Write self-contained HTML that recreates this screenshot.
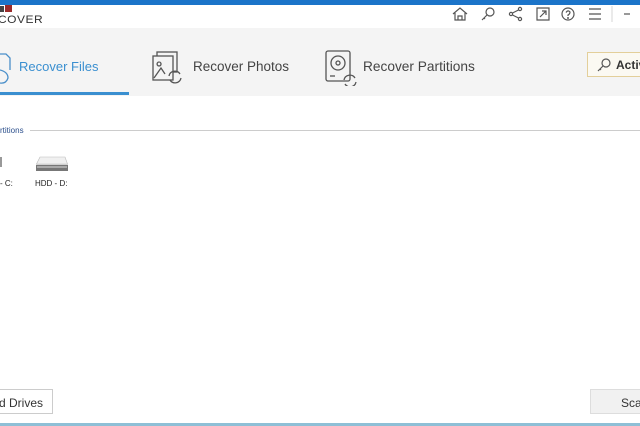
<!DOCTYPE html>
<html><head><meta charset="utf-8"><style>
*{margin:0;padding:0;box-sizing:border-box}
body{width:640px;height:426px;overflow:hidden;background:#fff;font-family:"Liberation Sans",sans-serif;position:relative}
.abs{position:absolute;white-space:nowrap}
.tab{position:absolute;top:59px;color:#444;white-space:nowrap}
</style></head><body>
<div class="abs" style="left:0;top:0;width:640px;height:5px;background:#1b74c9"></div>
<div class="abs" style="left:0;top:6px;width:12px;height:6px;background:#444;clip-path:polygon(0 0,100% 0,100% 100%,0 100%)"></div>
<div class="abs" style="left:4px;top:6px;width:2px;height:6px;background:#fff"></div>
<div class="abs" style="left:5px;top:5px;width:7px;height:7px;background:#9b2b2b"></div>
<div class="abs" style="left:-2px;top:12px;font:12px 'Liberation Sans';color:#333;letter-spacing:0.5px;transform:scaleY(0.95)">COVER</div>
<!-- top icons -->
<svg class="abs" style="left:450px;top:5px" width="190" height="18" fill="none" stroke="#555" stroke-width="1.2">
<path d="M3 9 L10 3 L17 9 M5 8 V15 H15 V8 M8 15 V11 H12 V15"/>
<circle cx="40" cy="7" r="4"/><path d="M37 10 L32 15 M34 13 L35 14"/>
<circle cx="70" cy="4" r="1.6"/><circle cx="61" cy="9" r="1.6"/><circle cx="70" cy="14" r="1.6"/><path d="M68.5 5 L62.5 8 M62.5 10 L68.5 13"/>
<path d="M87 3 H99 V15 H87 Z M90 12 L96 6 M92 6 H96 V10"/>
<circle cx="118" cy="9" r="6"/><path d="M116 7.5 Q118 4.5 120 7 Q120 9 118 10 V11"/><circle cx="118" cy="13" r=".4"/>
<path d="M139 4 H151 M139 9 H151 M139 14 H151"/>
<path d="M162 1 V17" stroke="#ddd"/><path d="M174 9 H180"/>
</svg>
<div class="abs" style="left:0;top:28px;width:640px;height:68px;background:#f4f4f4"></div>
<div class="abs" style="left:0;top:92px;width:129px;height:3px;background:#3a8fd0"></div>
<!-- tab icons -->
<svg class="abs" style="left:0;top:50px" width="20" height="36" fill="none" stroke="#4a8fc9" stroke-width="1.3"><path d="M0 4 H6 L10 8 V20 M0 20 Q8 22 8 28 Q6 34 0 33"/></svg>
<div class="tab" style="left:19px;color:#3a8fd0;font-size:13px">Recover Files</div>
<svg class="abs" style="left:151px;top:50px" width="34" height="34" fill="none" stroke="#555" stroke-width="1.3"><rect x="6" y="2" width="20" height="20"/><rect x="2" y="6" width="20" height="24" fill="#f4f4f4"/><path d="M3 28 L10 18 L14 24 M8 12 a2 2 0 1 0 .1 0"/><path d="M18 26 a6 6 0 0 1 11 -2 M30 28 a6 6 0 0 1 -11 2"/></svg>
<div class="tab" style="left:193px;font-size:13.5px">Recover Photos</div>
<svg class="abs" style="left:325px;top:50px" width="34" height="36" fill="none" stroke="#555" stroke-width="1.3"><rect x="1" y="1" width="24" height="30" rx="2"/><circle cx="13" cy="13" r="7"/><circle cx="13" cy="13" r="2"/><path d="M5 26 H10"/><path d="M19 30 a6 6 0 0 1 11 -2 M31 32 a6 6 0 0 1 -11 2" /></svg>
<div class="tab" style="left:363px;font-size:13.7px">Recover Partitions</div>
<div class="abs" style="left:587px;top:52px;width:60px;height:25px;border:1px solid #e3cf9a;background:#fbf9f2;font:bold 12px 'Liberation Sans';color:#333;padding:5px 0 0 28px">Activ</div>
<svg class="abs" style="left:596px;top:57px" width="16" height="16" fill="none" stroke="#555" stroke-width="1.2"><circle cx="10" cy="6" r="4"/><path d="M7 9 L2 14 M4 12 L5 13"/></svg>
<!-- section -->
<div class="abs" style="left:0;top:126px;font-size:8px;color:#2b4f8c">rtitions</div>
<div class="abs" style="left:30px;top:130px;width:610px;height:1px;background:#ccc"></div>
<div class="abs" style="left:0;top:157px;width:2px;height:10px;background:#999"></div>
<div class="abs" style="left:0;top:179px;font-size:8px;color:#222">- C:</div>
<svg class="abs" style="left:35px;top:156px" width="34" height="18"><path d="M5 1 H30 L33 9 V15 H1 V9 Z" fill="#d8d8d8"/><path d="M5 1 H30 L32.5 8 H1.5 Z" fill="#f0f0f0" stroke="#bbb" stroke-width=".6"/><rect x="1" y="9" width="32" height="6" fill="#777"/><rect x="2" y="10" width="30" height="2" fill="#aaa"/></svg>
<div class="abs" style="left:35px;top:179px;font-size:8px;color:#222">HDD - D:</div>
<!-- bottom -->
<div class="abs" style="left:-2px;top:389px;width:55px;height:25px;border:1px solid #ccc;background:#fff;font-size:12px;color:#333;padding:6px 0 0 0">d Drives</div>
<div class="abs" style="left:590px;top:389px;width:60px;height:25px;border:1px solid #ddd;background:#f1f1f1;font-size:12px;color:#333;padding:6px 0 0 30px">Sca</div>
<div class="abs" style="left:0;top:423px;width:640px;height:3px;background:#8ebfd6"></div>
</body></html>
